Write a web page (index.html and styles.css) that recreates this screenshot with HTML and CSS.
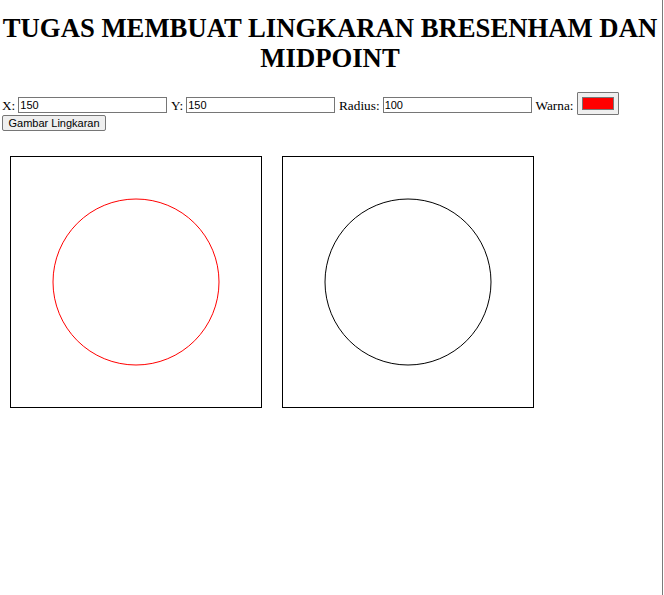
FILE: index.html
```html
<!DOCTYPE html>
<html>
<head>
<meta charset="utf-8">
<title>Lingkaran Bresenham dan Midpoint</title>
<link rel="stylesheet" href="styles.css">
</head>
<body>
<h1 class="title">TUGAS MEMBUAT LINGKARAN BRESENHAM DAN MIDPOINT</h1>
<div class="controls">
  <div class="row">
    <label class="lbl">X:</label>
    <input class="field" type="text" value="150">
    <label class="lbl">Y:</label>
    <input class="field" type="text" value="150">
    <label class="lbl">Radius:</label>
    <input class="field" type="text" value="100">
    <label class="lbl">Warna:</label>
    <span class="color"><span class="swatch"></span></span>
  </div>
  <button class="btn" type="button">Gambar Lingkaran</button>
</div>
<div class="canvases">
  <div class="canvas">
    <svg width="250" height="250" viewBox="0 0 250 250"><circle cx="125" cy="125" r="83" fill="none" stroke="#ff0000" stroke-width="1"/></svg>
  </div>
  <div class="canvas">
    <svg width="250" height="250" viewBox="0 0 250 250"><circle cx="125" cy="125" r="83" fill="none" stroke="#000000" stroke-width="1"/></svg>
  </div>
</div>
</body>
</html>
```

FILE: styles.css
```css
html {
  height: 100%;
  background: #ffffff;
}
body {
  margin: 0;
  min-height: 100%;
  width: 663px;
  box-sizing: border-box;
  border-right: 1px solid #7a7a7a;
  font-family: "Liberation Serif", "Times New Roman", serif;
  font-size: 13.3px;
  color: #000;
}
.title {
  font-size: 26.7px;
  line-height: 30px;
  font-weight: bold;
  text-align: center;
  margin: 13px 0 18px;
  padding-right: 2px;
}
.controls {
  padding-left: 2px;
}
.row {
  display: flex;
  align-items: center;
  height: 24px;
}
.lbl {
  margin-right: 3px;
  line-height: 15px;
  padding-top: 4px;
}
.field {
  box-sizing: border-box;
  width: 149px;
  height: 16px;
  margin: 4px 3.8px 0 0;
  padding: 0 1px;
  border: 1px solid #767676;
  font-family: "Liberation Sans", Arial, sans-serif;
  font-size: 11px;
  color: #000;
  background: #fff;
}
.color {
  box-sizing: border-box;
  display: flex;
  width: 42px;
  height: 23px;
  padding: 4px 4px;
  border: 1px solid #767676;
  background: #efefef;
  border-radius: 1px;
  margin-left: 1px;
}
.swatch {
  flex: 1;
  background: #ff0000;
  border: 1px solid #777;
}
.btn {
  display: block;
  box-sizing: border-box;
  height: 16px;
  margin: 0;
  padding: 0 5.5px;
  border: 1px solid #767676;
  border-radius: 2px;
  background: #efefef;
  font-family: "Liberation Sans", Arial, sans-serif;
  font-size: 11px;
  line-height: 13px;
  color: #000;
}
.canvases {
  display: flex;
  gap: 20px;
  margin: 25px 0 0 10px;
}
.canvas {
  width: 250px;
  height: 250px;
  border: 1px solid #000;
}
.canvas svg {
  display: block;
}
```
